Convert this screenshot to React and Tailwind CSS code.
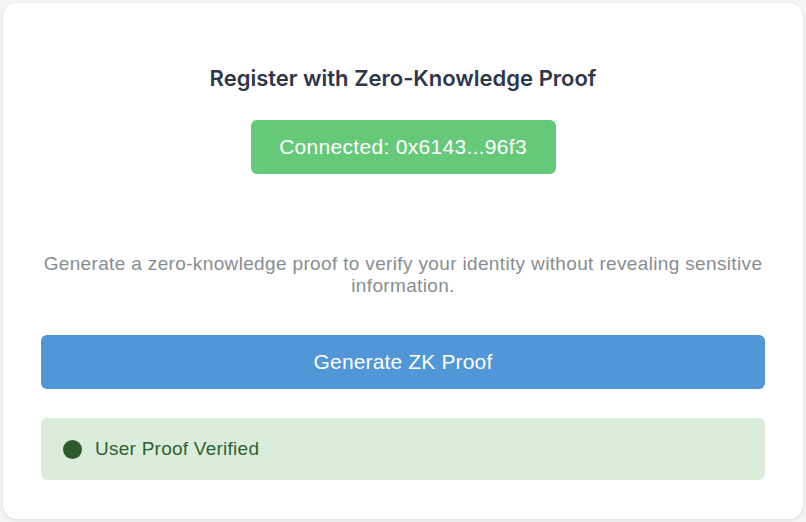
import React from 'react';

const BODY = { fontFamily: '"Liberation Sans", Arial, sans-serif' };

export default function App() {
  return (
    <div className="min-h-screen w-full bg-[#f4f5f7] p-[3px]">
      <div
        className="w-[800px] h-[516px] rounded-[14px] bg-white shadow-[0_1px_4px_rgba(0,0,0,0.12)] px-[38px] pt-[61px] flex flex-col items-center"
        style={BODY}
      >
        {/* Header */}
        <h2
          className="text-[22px] leading-[29px] font-semibold text-[#2d3748]"
          style={{ fontFamily: 'Inter, "Noto Sans", sans-serif' }}
        >
          Register with Zero-Knowledge Proof
        </h2>

        {/* Wallet */}
        <div className="mt-[27px] w-[305px] h-[54px] rounded-[6px] bg-[#66c979] flex items-center justify-center text-white text-[21px] tracking-[0.3px]">
          Connected: 0x6143...96f3
        </div>

        <p className="mt-[79px] text-center text-[19px] leading-[22px] tracking-[0.35px] text-[#868e91]">
          Generate a zero-knowledge proof to verify your identity without revealing sensitive information.
        </p>

        <button className="mt-[38px] w-full h-[54px] rounded-[6px] bg-[#5196d6] text-white text-[21px] tracking-[0.15px]">
          Generate ZK Proof
        </button>

        {/* Status */}
        <div className="mt-[29px] w-full h-[62px] rounded-[6px] bg-[#daeddb] flex items-center gap-[13px] px-[22px]">
          <span className="w-[19px] h-[19px] rounded-full bg-[#2b5a2b] shrink-0" />
          <span className="text-[19px] tracking-[0.25px] text-[#2f5f31]">User Proof Verified</span>
        </div>
      </div>
    </div>
  );
}
